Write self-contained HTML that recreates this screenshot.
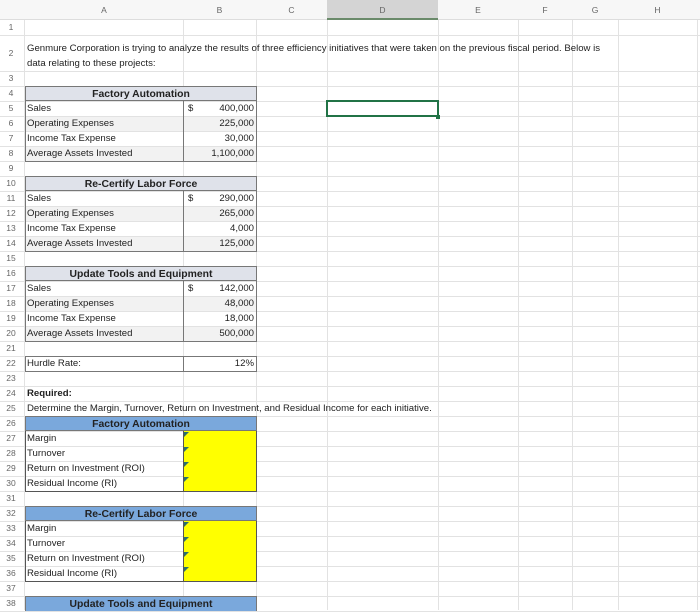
<!DOCTYPE html>
<html><head><meta charset="utf-8"><style>
*{margin:0;padding:0;box-sizing:border-box}
body{width:700px;height:610px;overflow:hidden;background:#fff;font-family:"Liberation Sans",Arial,sans-serif;font-size:9.6px;color:#222;position:relative}
.a{position:absolute;white-space:nowrap}
.vl{position:absolute;top:20px;bottom:0;width:1px;background:#e2e2e2}
.hl{position:absolute;left:0;right:0;height:1px;background:#e2e2e2}
.rn{position:absolute;left:0;width:22px;text-align:center;color:#666;font-size:8.5px}
.ch{position:absolute;top:0;height:20px;line-height:20px;text-align:center;color:#666;font-size:8.5px}
.t{position:absolute;left:27px;font-size:9.6px;line-height:15px}
.v{position:absolute;right:446px;line-height:15px;text-align:right}
.hd{position:absolute;left:25px;width:232px;height:15px;line-height:15px;text-align:center;font-weight:bold;font-size:10.4px;border:1px solid #777}
.tri{position:absolute;left:184px;width:0;height:0;border-top:5px solid #2e6f6a;border-right:5px solid transparent}
</style></head><body>
<div class="a" style="left:0;top:0;width:700px;height:20px;background:#f7f7f7;border-bottom:1px solid #ddd"></div>
<div class="a" style="left:327px;top:0;width:111px;height:20px;background:#d4d4d4;border-bottom:2px solid #6a8a6a"></div>
<div class="ch" style="left:25px;width:158px">A</div>
<div class="ch" style="left:183px;width:73px">B</div>
<div class="ch" style="left:256px;width:71px">C</div>
<div class="ch" style="left:327px;width:111px">D</div>
<div class="ch" style="left:438px;width:80px">E</div>
<div class="ch" style="left:518px;width:54px">F</div>
<div class="ch" style="left:572px;width:46px">G</div>
<div class="ch" style="left:618px;width:79px">H</div>
<div class="vl" style="left:24px"></div><div class="vl" style="left:183px"></div><div class="vl" style="left:256px"></div><div class="vl" style="left:327px"></div><div class="vl" style="left:438px"></div><div class="vl" style="left:518px"></div><div class="vl" style="left:572px"></div><div class="vl" style="left:618px"></div><div class="vl" style="left:697px"></div>
<div class="hl" style="top:35px"></div><div class="hl" style="top:71px"></div>
<div class="a" style="left:25px;top:116px;width:231px;height:15px;background:#f2f2f2"></div>
<div class="a" style="left:25px;top:146px;width:231px;height:15px;background:#f2f2f2"></div>
<div class="a" style="left:25px;top:206px;width:231px;height:15px;background:#f2f2f2"></div>
<div class="a" style="left:25px;top:236px;width:231px;height:15px;background:#f2f2f2"></div>
<div class="a" style="left:25px;top:296px;width:231px;height:15px;background:#f2f2f2"></div>
<div class="a" style="left:25px;top:326px;width:231px;height:15px;background:#f2f2f2"></div>
<div class="rn" style="top:20px;line-height:15px">1</div>
<div class="rn" style="top:35px;line-height:36px">2</div>
<script>
for(let n=3;n<=38;n++){let t=71+(n-3)*15;document.write('<div class="rn" style="top:'+t+'px;line-height:15px">'+n+'</div><div class="hl" style="top:'+(t+15)+'px"></div>');}
</script>
<div class="t" style="top:41px;line-height:15px;white-space:normal;width:590px">Genmure Corporation is trying to analyze the results of three efficiency initiatives that were taken on the previous fiscal period. Below is data relating to these projects:</div>
<div class="hd" style="top:86px;background:#dfe2ea">Factory Automation</div>
<div class="a" style="left:25px;top:101px;width:232px;height:61px;border:1px solid #777;border-top:none"></div>
<div class="a" style="left:183px;top:101px;width:1px;height:60px;background:#777"></div>
<div class="t" style="top:101px">Sales</div><div class="t" style="top:116px">Operating Expenses</div><div class="t" style="top:131px">Income Tax Expense</div><div class="t" style="top:146px">Average Assets Invested</div>
<div class="a" style="left:188px;top:101px;line-height:15px">$</div>
<div class="v" style="top:101px">400,000</div><div class="v" style="top:116px">225,000</div><div class="v" style="top:131px">30,000</div><div class="v" style="top:146px">1,100,000</div>
<div class="hd" style="top:176px;background:#dfe2ea">Re-Certify Labor Force</div>
<div class="a" style="left:25px;top:191px;width:232px;height:61px;border:1px solid #777;border-top:none"></div>
<div class="a" style="left:183px;top:191px;width:1px;height:60px;background:#777"></div>
<div class="t" style="top:191px">Sales</div><div class="t" style="top:206px">Operating Expenses</div><div class="t" style="top:221px">Income Tax Expense</div><div class="t" style="top:236px">Average Assets Invested</div>
<div class="a" style="left:188px;top:191px;line-height:15px">$</div>
<div class="v" style="top:191px">290,000</div><div class="v" style="top:206px">265,000</div><div class="v" style="top:221px">4,000</div><div class="v" style="top:236px">125,000</div>
<div class="hd" style="top:266px;background:#dfe2ea">Update Tools and Equipment</div>
<div class="a" style="left:25px;top:281px;width:232px;height:61px;border:1px solid #777;border-top:none"></div>
<div class="a" style="left:183px;top:281px;width:1px;height:60px;background:#777"></div>
<div class="t" style="top:281px">Sales</div><div class="t" style="top:296px">Operating Expenses</div><div class="t" style="top:311px">Income Tax Expense</div><div class="t" style="top:326px">Average Assets Invested</div>
<div class="a" style="left:188px;top:281px;line-height:15px">$</div>
<div class="v" style="top:281px">142,000</div><div class="v" style="top:296px">48,000</div><div class="v" style="top:311px">18,000</div><div class="v" style="top:326px">500,000</div>
<div class="a" style="left:25px;top:356px;width:232px;height:16px;border:1px solid #777"></div>
<div class="a" style="left:183px;top:356px;width:1px;height:15px;background:#777"></div>
<div class="t" style="top:356px">Hurdle Rate:</div><div class="v" style="top:356px">12%</div>
<div class="t" style="top:386px;font-weight:bold">Required:</div>
<div class="t" style="top:401px">Determine the Margin, Turnover, Return on Investment, and Residual Income for each initiative.</div>
<div class="hd" style="top:416px;background:#7aa8dc">Factory Automation</div>
<div class="a" style="left:184px;top:431px;width:72px;height:60px;background:#ffff00"></div>
<div class="a" style="left:25px;top:431px;width:232px;height:61px;border:1px solid #555;border-top:none"></div>
<div class="a" style="left:183px;top:431px;width:1px;height:60px;background:#555"></div>
<div class="t" style="top:431px">Margin</div><div class="t" style="top:446px">Turnover</div><div class="t" style="top:461px">Return on Investment (ROI)</div><div class="t" style="top:476px">Residual Income (RI)</div>
<div class="tri" style="top:432px"></div><div class="tri" style="top:447px"></div><div class="tri" style="top:462px"></div><div class="tri" style="top:477px"></div>
<div class="hd" style="top:506px;background:#7aa8dc">Re-Certify Labor Force</div>
<div class="a" style="left:184px;top:521px;width:72px;height:60px;background:#ffff00"></div>
<div class="a" style="left:25px;top:521px;width:232px;height:61px;border:1px solid #555;border-top:none"></div>
<div class="a" style="left:183px;top:521px;width:1px;height:60px;background:#555"></div>
<div class="t" style="top:521px">Margin</div><div class="t" style="top:536px">Turnover</div><div class="t" style="top:551px">Return on Investment (ROI)</div><div class="t" style="top:566px">Residual Income (RI)</div>
<div class="tri" style="top:522px"></div><div class="tri" style="top:537px"></div><div class="tri" style="top:552px"></div><div class="tri" style="top:567px"></div>
<div class="hd" style="top:596px;background:#7aa8dc;border-bottom:none">Update Tools and Equipment</div>
<div class="a" style="left:326px;top:100px;width:113px;height:17px;border:2px solid #217346"></div>
<div class="a" style="left:436px;top:115px;width:4px;height:4px;background:#217346"></div>
</body></html>
